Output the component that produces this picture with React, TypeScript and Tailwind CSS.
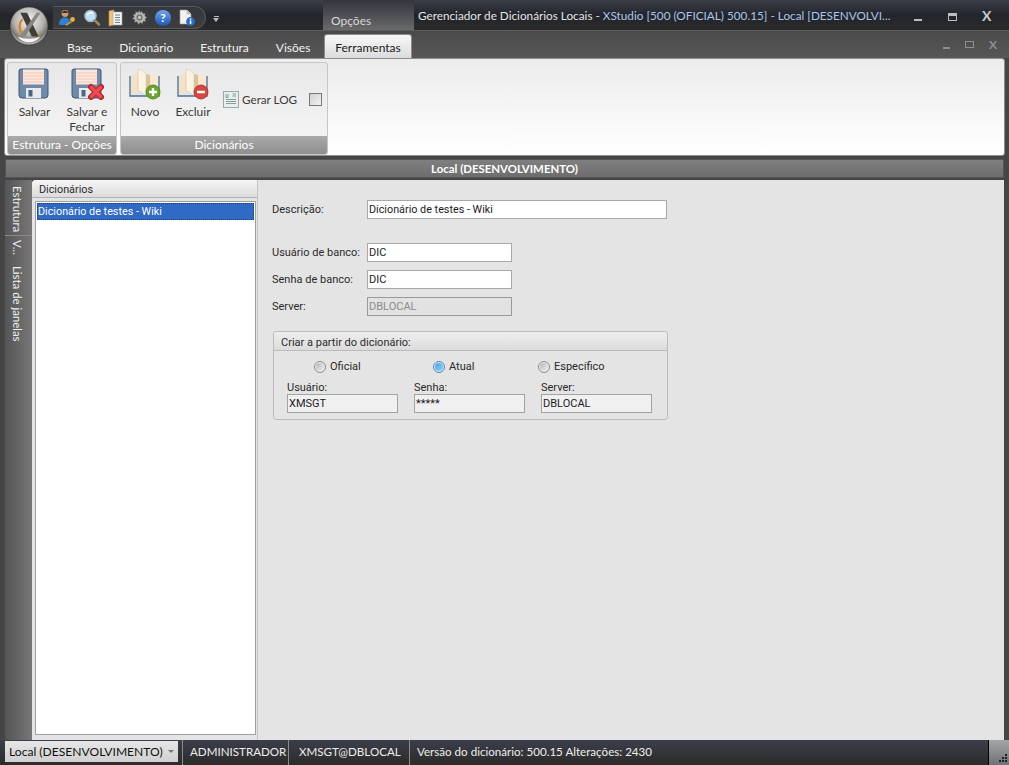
import type { ReactNode } from "react";

function Orb() {
  return (
    <svg width="40" height="40" viewBox="0 0 42 42">
      <defs>
        <radialGradient id="orbBg" cx="50%" cy="35%" r="70%">
          <stop offset="0%" stopColor="#f4f4f4" />
          <stop offset="55%" stopColor="#b5b3ae" />
          <stop offset="75%" stopColor="#77746e" />
          <stop offset="100%" stopColor="#e8e8e8" />
        </radialGradient>
      </defs>
      <circle cx="21" cy="21" r="20" fill="url(#orbBg)" stroke="#2a2a2a" strokeWidth="0.6" />
      <path d="M9 32 A15 15 0 0 0 33 32 A20 12 0 0 1 9 32Z" fill="#f6f6f6" />
      <path d="M14 14 A11 11 0 0 0 14 29" fill="none" stroke="#d9822b" strokeWidth="2.4" />
      <path d="M24 32 A11 11 0 0 0 31 27" fill="none" stroke="#e0a23c" strokeWidth="2" />
      <path d="M12 7 H19 L31 32 H24Z" fill="#3f3d3a" />
      <path d="M29 7 H33 L17 32 H11Z" fill="#8a8781" />
    </svg>
  );
}

function QatUser() {
  return (
    <svg width="18" height="18" viewBox="0 0 18 18">
      <circle cx="7" cy="4.5" r="3.4" fill="#c99a6b" />
      <path d="M3.6 4 Q7 -1 10.4 4Z" fill="#3a2a20" />
      <path d="M1 16 Q1 8.5 7 8.5 Q11 8.5 12 12 L9 16Z" fill="#2f7fd6" />
      <circle cx="14.5" cy="10.5" r="2.4" fill="#e8b23a" />
      <path d="M13 12 L7.5 15.5 L8.5 16.8 L14 13.2Z" fill="#d89a24" />
    </svg>
  );
}

function QatSearch() {
  return (
    <svg width="18" height="18" viewBox="0 0 18 18">
      <circle cx="7.5" cy="7" r="5.6" fill="#bfe0f7" stroke="#9db4c4" strokeWidth="1.4" />
      <path d="M4 6 Q6 3 10 4" fill="none" stroke="#fff" strokeWidth="1.4" />
      <path d="M12 11.5 L16 15.5" stroke="#9a8a5a" strokeWidth="2.6" strokeLinecap="round" />
    </svg>
  );
}

function QatPages() {
  return (
    <svg width="16" height="18" viewBox="0 0 16 18">
      <path d="M1 2 L6 1 V16 L1 17Z" fill="#f2c078" stroke="#c98f3c" strokeWidth="0.6" />
      <rect x="5" y="3" width="9" height="13" fill="#f4f4f4" stroke="#a5a5a5" strokeWidth="0.6" />
      <path d="M7 6 H12 M7 8.5 H12 M7 11 H12 M7 13.5 H12" stroke="#5f6f7f" strokeWidth="0.9" />
    </svg>
  );
}

function QatGear() {
  return (
    <svg width="17" height="17" viewBox="0 0 17 17">
      <path
        d="M8.5 1.2 L7.2 3.4 L4.6 2.6 L4.5 5 L2 5.8 L3.3 8 L1.4 9.8 L3.8 10.6 L3.6 13.2 L6.1 12.7 L7.4 15.4 L9.2 13.4 L11.4 14.8 L12.2 12.3 L14.9 12.4 L14.1 9.9 L16 8.2 L13.8 6.9 L14.4 4.4 L11.9 4.6 L10.8 2.2 L9 3.6Z"
        fill="#b5b5b2"
        stroke="#5e5e5c"
        strokeWidth="0.5"
      />
      <circle cx="8.5" cy="8.4" r="3" fill="#6d6d6b" />
      <circle cx="8.5" cy="8.4" r="1.6" fill="#c4c4c2" />
    </svg>
  );
}

function QatHelp() {
  return (
    <div className="w-[16px] h-[16px] rounded-full bg-gradient-to-b from-[#6ea6ec] to-[#1f55b8] flex items-center justify-center text-white text-[12px] font-bold leading-none">
      ?
    </div>
  );
}

function QatInfo() {
  return (
    <svg width="18" height="18" viewBox="0 0 18 18">
      <path d="M2 1 H9 L13 5 V15 H2Z" fill="#f2f2f2" stroke="#9a9a9a" strokeWidth="0.6" />
      <path d="M9 1 V5 H13" fill="#cfcfcf" stroke="#9a9a9a" strokeWidth="0.6" />
      <circle cx="12.5" cy="12.5" r="4.4" fill="#2a6fc4" />
      <rect x="11.8" y="11.4" width="1.5" height="3.6" fill="#fff" />
      <rect x="11.8" y="9.4" width="1.5" height="1.3" fill="#fff" />
    </svg>
  );
}

function Floppy({ close }: { close?: boolean }) {
  return (
    <svg width="33" height="32" viewBox="0 0 33 32">
      <path d="M1 3 Q1 1 3 1 H28 Q30 1 30 3 V27 Q30 30 27 30 H4 Q1 30 1 27Z" fill="#6f8aa8" stroke="#3f5977" strokeWidth="1" />
      <rect x="5" y="1.5" width="21" height="15" fill="#fbe9df" />
      <path d="M5 5 H26 M5 8 H26 M5 11 H26 M5 14 H26" stroke="#f4c3b5" strokeWidth="1" />
      <rect x="8" y="20" width="15" height="10" fill="#e8eaec" />
      <rect x="10.5" y="22" width="4" height="6.5" fill="#4a6585" />
      {close && (
        <g>
          <path d="M20 19 L30 29 M30 19 L20 29" stroke="#b3262a" strokeWidth="6" strokeLinecap="round" />
          <path d="M20.5 19.5 L29.5 28.5 M29.5 19.5 L20.5 28.5" stroke="#ee4a4f" strokeWidth="3.6" strokeLinecap="round" />
        </g>
      )}
    </svg>
  );
}

function Book({ kind }: { kind: "add" | "remove" }) {
  const add = kind === "add";
  return (
    <svg width="32" height="32" viewBox="0 0 32 32">
      <path d="M1 8 V28 H30 V8" fill="#dfe6ee" stroke="#4b6f9b" strokeWidth="1.3" />
      <path d="M2 8 Q6 5 10 7 V26 Q6 25 2 26.5Z" fill="#f3e2c6" />
      <path d="M14 7 H29 V26.5 H14Z" fill="#f6e9d0" />
      <path d="M9 1 Q14 2 17 6 V27 Q13 24 9 23Z" fill="#fbf4e4" stroke="#d8c5a0" strokeWidth="0.6" />
      <path d="M17 6 V27 L21 27 V7Z" fill="#d9c29c" />
      <circle cx="24" cy="24" r="7" fill={add ? "#6aa82c" : "#d8463c"} stroke={add ? "#4a7f1c" : "#a92d27"} strokeWidth="0.8" />
      <path d="M20 24 H28" stroke="#fff" strokeWidth="2.4" />
      {add && <path d="M24 20 V28" stroke="#fff" strokeWidth="2.4" />}
    </svg>
  );
}

function LogIcon() {
  return (
    <svg width="16" height="17" viewBox="0 0 16 17">
      <rect x="0.5" y="0.5" width="15" height="16" fill="#e6efed" stroke="#9aa9a7" />
      <path d="M3 3 V6.5 H5 V3 M9.5 3 H13 M9.5 5 H13 M3 8.5 H13 M3 10.5 H13 M3 12.5 H13" fill="none" stroke="#6f8582" strokeWidth="0.8" />
    </svg>
  );
}

function RibbonGroup({ title, className, children }: { title: string; className: string; children: ReactNode }) {
  return (
    <div className={`flex flex-col rounded-[3px] border border-[#c6c6c6] bg-gradient-to-b from-[#e8e8e8] to-[#f6f6f6] overflow-hidden ${className}`}>
      <div className="flex-1 flex">{children}</div>
      <div className="h-[18px] bg-gradient-to-b from-[#aaaaaa] to-[#8e8e8e] text-white text-center leading-[18px]">{title}</div>
    </div>
  );
}

function RibbonButton({ icon, children, className }: { icon: ReactNode; children: ReactNode; className: string }) {
  return (
    <div className={`flex flex-col items-center pt-[5px] text-[#3a3a3a] leading-[15px] text-center ${className}`}>
      {icon}
      <div className="mt-[4px]">{children}</div>
    </div>
  );
}

function Field({ value, disabled, className }: { value: string; disabled?: boolean; className: string }) {
  return (
    <div className={`h-[19px] border px-[1px] leading-[18px] ${disabled ? "bg-[#e2e2e2] border-[#9a9a9a] text-[#8c8c8c]" : "bg-white border-[#a9a9a9] text-[#1c1c1c]"} ${className}`}>
      {value}
    </div>
  );
}

function FormRow({ label, children }: { label: string; children: ReactNode }) {
  return (
    <div className="flex items-center">
      <div className="w-[95px] pt-[1px] text-[#2a2a2a]">{label}</div>
      {children}
    </div>
  );
}

function Radio({ label, checked, className }: { label: string; checked?: boolean; className: string }) {
  return (
    <div className={`flex items-center gap-[4px] ${className}`}>
      <div className={`w-[12px] h-[12px] rounded-full border flex items-center justify-center ${checked ? "border-[#4a88b5] bg-[#d6e9f5]" : "border-[#8b8b8b] bg-[#ececec]"}`}>
        <div className={`w-[8px] h-[8px] rounded-full ${checked ? "bg-gradient-to-br from-[#4f9fe0] to-[#8fd0f5]" : "bg-gradient-to-br from-[#b5b5b5] to-[#f2f2f2]"}`} />
      </div>
      <span className="pt-[1px]">{label}</span>
    </div>
  );
}

function SmallField({ label, value }: { label: string; value: string }) {
  return (
    <div className="w-[111px]">
      <div className="h-[12px] leading-[14px]">{label}</div>
      <div className="h-[19px] mt-[1px] bg-[#f0f0f0] border border-[#a3a3a3] px-[1px] leading-[18px] text-[#1c1c1c]">{value}</div>
    </div>
  );
}

function VerticalTab({ label, className }: { label: string; className: string }) {
  return (
    <div className={`[writing-mode:vertical-rl] text-[#f0f0f0] text-[11.4px] flex items-center pr-[3px] ${className}`}>{label}</div>
  );
}

export default function App() {
  return (
    <div className="w-[1009px] h-[765px] overflow-hidden relative flex flex-col bg-[#454545] font-['Lato',sans-serif] text-[12px] text-[#2a2a2a]">
      {/* orb over title bar and tabs */}
      <div className="absolute left-[9px] top-[6px] z-10">
        <Orb />
      </div>

      {/* title bar */}
      <div className="h-[30px] flex bg-gradient-to-b from-[#3b3f49] via-[#23252b] to-[#2a2a2a]">
        <div className="w-[53px]" />
        <div className="mt-[6px] w-[153px] h-[23px] rounded-r-[12px] bg-gradient-to-b from-[#36383e] to-[#3d3d3d] border border-[#55575c] border-l-0 flex items-center gap-[7px] pl-[5px]">
          <QatUser />
          <QatSearch />
          <QatPages />
          <QatGear />
          <QatHelp />
          <QatInfo />
        </div>
        <div className="w-[13px] flex items-center justify-end text-[#bbbbbb]">
          <div className="mt-[7px] flex flex-col items-center gap-[1px]">
            <div className="w-[5px] h-[1px] bg-[#bbbbbb]" />
            <div className="w-0 h-0 border-x-[3px] border-x-transparent border-t-[4px] border-t-[#bbbbbb]" />
          </div>
        </div>
        <div className="w-[104px]" />
        <div className="w-[91px] flex items-end pl-[8px] text-[#d8d8d8] bg-gradient-to-b from-[#33363d] to-[#6a6a6a]">Opções</div>
        <div className="flex-1 flex items-start pt-[7px] pl-[4px] whitespace-nowrap text-[11.75px]">
          <span className="text-[#e4e4e4]">Gerenciador de Dicionários Locais -</span>
          <span className="text-[#a9c7ea] ml-[3px]">XStudio [500 (OFICIAL) 500.15] - Local [DESENVOLVI...</span>
        </div>
        <div className="w-[100px] flex items-center text-[#cccccc] font-bold">
          <div className="w-[8px] h-[2px] bg-[#bdbdbd] ml-[5px] mt-[9px]" />
          <div className="w-[9px] h-[8px] border border-[#bdbdbd] border-t-[3px] ml-[26px] mt-[3px]" />
          <span className="ml-[25px] text-[14px]">X</span>
        </div>
      </div>

      {/* tab row */}
      <div className="h-[28px] flex items-end bg-gradient-to-b from-[#4a4a4a] to-[#575757] border-t border-[#5c5c5c]">
        <div className="w-[67px]" />
        <div className="flex gap-[27px] pb-[1px] text-[#f2f2f2] w-[257px]">
          <span>Base</span>
          <span>Dicionário</span>
          <span>Estrutura</span>
          <span>Visões</span>
        </div>
        <div className="w-[88px] h-[24px] rounded-t-[3px] border border-b-0 border-[#8c8c8c] bg-gradient-to-b from-[#f8f8f8] to-[#dcdcdc] text-center leading-[25px] text-[#1a1a1a]">
          Ferramentas
        </div>
        <div className="flex-1 flex justify-end items-center self-stretch pr-[12px] text-[#8f8f8f] gap-[15px] font-bold">
          <div className="w-[7px] h-[2px] bg-[#8f8f8f] mt-[6px]" />
          <div className="w-[9px] h-[7px] border border-[#8f8f8f]" />
          <span className="text-[12px]">X</span>
        </div>
      </div>

      {/* ribbon */}
      <div className="h-[98px] mx-[4px] flex gap-[3px] rounded-[3px] border border-[#8f8f8f] bg-gradient-to-b from-[#ececec] to-[#ffffff] pl-[2px] pt-[3px]">
        <RibbonGroup title="Estrutura - Opções" className="w-[110px]">
          <RibbonButton icon={<Floppy />} className="w-[53px]">Salvar</RibbonButton>
          <RibbonButton icon={<Floppy close />} className="w-[52px]">Salvar e<br />Fechar</RibbonButton>
        </RibbonGroup>
        <RibbonGroup title="Dicionários" className="w-[208px]">
          <RibbonButton icon={<Book kind="add" />} className="w-[48px]">Novo</RibbonButton>
          <RibbonButton icon={<Book kind="remove" />} className="w-[48px]">Excluir</RibbonButton>
          <div className="flex items-center gap-[3px] ml-[6px] text-[11.7px] text-[#3a3a3a]">
            <LogIcon />
            <span>Gerar LOG</span>
            <div className="w-[13px] h-[13px] ml-[9px] border border-[#777777] bg-gradient-to-br from-[#cfcfcf] to-[#f4f4f4]" />
          </div>
        </RibbonGroup>
      </div>

      {/* header band */}
      <div className="h-[19px] mx-[5px] mt-[3px] border border-[#555555] bg-gradient-to-b from-[#7f7f7f] to-[#6d6d6d] text-white font-bold text-center leading-[18px] text-[11.4px]">
        Local (DESENVOLVIMENTO)
      </div>

      {/* content */}
      <div className="flex-1 min-h-0 mt-[2px] mx-[5px] flex">
        <div className="w-[27px] flex flex-col pt-[6px] bg-gradient-to-r from-[#555555] to-[#777777]">
          <VerticalTab label="Estrutura" className="h-[49px]" />
          <VerticalTab label="V..." className="h-[31px] border-t border-[#8a8a8a] pt-[4px]" />
          <VerticalTab label="Lista de janelas" className="flex-1" />
        </div>

        <div className="w-[226px] flex flex-col bg-[#e4e4e4] rounded-tl-[4px] border-r border-[#c4c4c4] font-['Roboto',sans-serif] text-[10.8px]">
          <div className="h-[18px] pl-[7px] leading-[20px] rounded-tl-[4px] border-b border-[#b0b0b0] bg-gradient-to-b from-[#f5f5f5] to-[#dcdcdc]">
            Dicionários
          </div>
          <div className="flex-1 ml-[3px] mt-[3px] mb-[5px] w-[221px] bg-white border border-[#a0a0a0] p-[1px]">
            <div className="h-[17px] leading-[15px] bg-[#316ac5] text-white border border-dotted border-[#1f3f73]">
              Dicionário de testes - Wiki
            </div>
          </div>
        </div>

        <div className="flex-1 bg-[#e4e4e4] pl-[14px] pt-[20px] font-['Roboto',sans-serif] text-[11px]">
          <FormRow label="Descrição:">
            <Field value="Dicionário de testes - Wiki" className="w-[300px] text-[10.8px]" />
          </FormRow>
          <div className="mt-[24px] flex flex-col gap-[8px]">
            <FormRow label="Usuário de banco:">
              <Field value="DIC" className="w-[145px]" />
            </FormRow>
            <FormRow label="Senha de banco:">
              <Field value="DIC" className="w-[145px]" />
            </FormRow>
            <FormRow label="Server:">
              <Field value="DBLOCAL" disabled className="w-[145px]" />
            </FormRow>
          </div>

          <div className="mt-[15px] ml-[1px] w-[395px] h-[89px] rounded-[3px] border border-[#bcbcbc]">
            <div className="h-[19px] pl-[7px] leading-[21px] border-b border-[#bcbcbc] bg-gradient-to-b from-[#eeeeee] to-[#dcdcdc] rounded-t-[3px]">
              Criar a partir do dicionário:
            </div>
            <div className="flex h-[15px] mt-[8px] pl-[40px]">
              <Radio label="Oficial" className="w-[119px]" />
              <Radio label="Atual" checked className="w-[105px]" />
              <Radio label="Específico" className="w-[90px]" />
            </div>
            <div className="flex mt-[7px] pl-[13px] gap-[16px]">
              <SmallField label="Usuário:" value="XMSGT" />
              <SmallField label="Senha:" value="*****" />
              <SmallField label="Server:" value="DBLOCAL" />
            </div>
          </div>
        </div>
      </div>

      {/* status bar */}
      <div className="h-[25px] flex bg-gradient-to-b from-[#3b3f4b] via-[#34353a] to-[#2b2b29] text-[#ededed] text-[11.6px] leading-[24px]">
        <div className="w-[5px]" />
        <div className="w-[173px] h-[21px] mt-[1px] bg-gradient-to-b from-[#e6e6e6] to-[#d0d0d0] text-[#111111] flex items-center pl-[4px] text-[12.1px] relative">
          Local (DESENVOLVIMENTO)
          <div className="absolute right-[4px] top-[9px] w-0 h-0 border-x-[3px] border-x-transparent border-t-[3px] border-t-[#777777]" />
        </div>
        <div className="w-[8px] ml-[4px] border-l border-[#8a8a8a]" />
        <div className="w-[98px]">ADMINISTRADOR</div>
        <div className="w-[11px] border-l border-[#8a8a8a]" />
        <div className="w-[110px]">XMSGT@DBLOCAL</div>
        <div className="flex-1 border-l border-[#8a8a8a] pl-[7px]">Versão do dicionário: 500.15 Alterações: 2430</div>
        <div className="w-[21px] border-l border-black bg-gradient-to-b from-[#a5a5a5] to-[#6f7375] relative">
          <div className="absolute right-[2px] bottom-[3px] grid grid-cols-3 gap-[1px]">
            <div className="w-[2px] h-[2px]" />
            <div className="w-[2px] h-[2px]" />
            <div className="w-[2px] h-[2px] bg-[#222222]" />
            <div className="w-[2px] h-[2px]" />
            <div className="w-[2px] h-[2px] bg-[#222222]" />
            <div className="w-[2px] h-[2px] bg-[#222222]" />
            <div className="w-[2px] h-[2px] bg-[#222222]" />
            <div className="w-[2px] h-[2px] bg-[#222222]" />
            <div className="w-[2px] h-[2px] bg-[#222222]" />
          </div>
        </div>
      </div>
    </div>
  );
}
